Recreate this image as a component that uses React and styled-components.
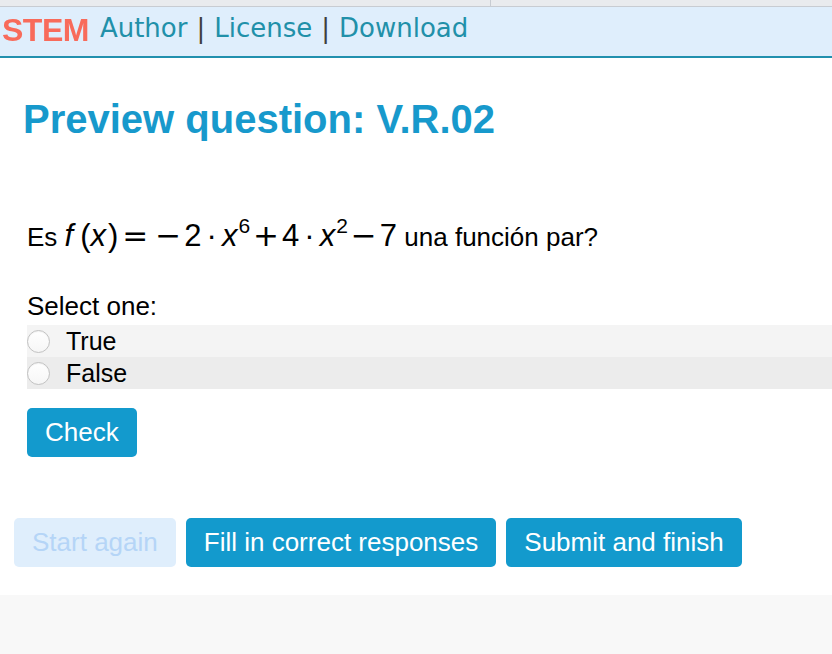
import React from "react";
import styled, { createGlobalStyle } from "styled-components";

const GlobalStyle = createGlobalStyle`
  html, body {
    margin: 0;
    padding: 0;
    background: #ffffff;
  }
  body {
    font-family: "Liberation Sans", Arial, Helvetica, sans-serif;
    color: #000;
  }
`;

export default function App() {
  return (
    <Page>
      <GlobalStyle />
      <TopStrip>
        <StripCell />
      </TopStrip>
      <NavBar>
        <Logo>STEM</Logo>
        <NavLink>Author</NavLink>
        <Sep>|</Sep>
        <NavLink>License</NavLink>
        <Sep>|</Sep>
        <NavLink>Download</NavLink>
      </NavBar>
      <Main>
        <Heading>Preview question: V.R.02</Heading>
        <Content>
          <Question>
            Es{" "}
            <MathExpr>
              <Var gap={7}>f</Var>
              <Paren>(</Paren>
              <Var gap={2}>x</Var>
              <Paren>)</Paren>
              <Op space={4}>=</Op>
              <Op space={3}>−</Op>
              <Num>2</Num>
              <Dot>·</Dot>
              <Var>x</Var>
              <Sup>6</Sup>
              <Op space={3}>+</Op>
              <Num>4</Num>
              <Dot>·</Dot>
              <Var>x</Var>
              <Sup>2</Sup>
              <Op space={3}>−</Op>
              <Num>7</Num>
            </MathExpr>{" "}
            una función par?
          </Question>
          <Prompt>Select one:</Prompt>
          <Options>
            <Option shade="#f4f4f4">
              <Radio />
              <OptionLabel>True</OptionLabel>
            </Option>
            <Option shade="#ececec">
              <Radio />
              <OptionLabel>False</OptionLabel>
            </Option>
          </Options>
          <Button>Check</Button>
        </Content>
        <Actions>
          <Button disabled>Start again</Button>
          <Button>Fill in correct responses</Button>
          <Button>Submit and finish</Button>
        </Actions>
      </Main>
      <Footer />
    </Page>
  );
}

const Page = styled.div`
  min-height: 654px;
  display: flex;
  flex-direction: column;
`;

const TopStrip = styled.div`
  height: 6px;
  background: #e9ebee;
  border-bottom: 1px solid #c8ccd2;
  display: flex;
`;

const StripCell = styled.div`
  width: 490px;
  border-right: 1px solid #c8ccd2;
`;

const NavBar = styled.div`
  height: 51px;
  box-sizing: border-box;
  padding: 0 2px 8px;
  background: #dfeefc;
  border-bottom: 2px solid #2190ae;
  display: flex;
  align-items: center;
  font-family: "DejaVu Sans", Verdana, sans-serif;
  font-size: 26px;
`;

const Logo = styled.span`
  font-family: "Liberation Sans", Arial, sans-serif;
  font-weight: bold;
  font-size: 32px;
  letter-spacing: -0.5px;
  color: #f86b5b;
  filter: blur(0.5px);
  margin-right: 11px;
  margin-top: 6px;
`;

const NavLink = styled.span`
  color: #2190a9;
`;

const Sep = styled.span`
  color: #3f3f3f;
  margin: 0 9px;
`;

const Main = styled.div`
  padding: 0 14px;
`;

const Heading = styled.h1`
  margin: 39px 0 0 9px;
  font-size: 40px;
  font-weight: bold;
  color: #1799cc;
`;

const Content = styled.div`
  padding-left: 13px;
`;

const Question = styled.div`
  margin-top: 73px;
  font-size: 26px;
  line-height: 40px;
`;

const MathExpr = styled.span`
  font-size: 31px;
  white-space: nowrap;
`;

const Var = styled.span`
  font-style: italic;
  margin-right: ${(p) => p.gap || 0}px;
`;

const Paren = styled.span``;

const Num = styled.span``;

const Op = styled.span`
  font-family: "DejaVu Sans", sans-serif;
  margin: 0 ${(p) => p.space}px;
`;

const Dot = styled.span`
  margin: 0 5px;
`;

const Sup = styled.sup`
  font-size: 21px;
  vertical-align: 13px;
  line-height: 0;
  margin-left: 1px;
`;

const Prompt = styled.div`
  margin-top: 33px;
  font-size: 26px;
  line-height: 32px;
  margin-bottom: 3px;
`;

const Options = styled.div`
  margin-right: -14px;
`;

const Option = styled.div`
  height: 32px;
  display: flex;
  align-items: center;
  background: ${(p) => p.shade};
`;

const Radio = styled.span`
  width: 23px;
  height: 23px;
  box-sizing: border-box;
  border-radius: 50%;
  border: 1px solid #c2c2c2;
  background: linear-gradient(#ffffff, #f6f6f6);
  box-shadow: inset 0 1px 1px rgba(0, 0, 0, 0.05);
  margin-right: 16px;
`;

const OptionLabel = styled.span`
  font-size: 25px;
`;

const Button = styled.button`
  height: 49px;
  padding: 0 18px;
  border: none;
  border-radius: 5px;
  font-family: "Liberation Sans", Arial, sans-serif;
  font-size: 26px;
  color: #ffffff;
  background: #139acd;
  margin-top: 19px;
  cursor: pointer;

  &:disabled {
    background: #dfeefc;
    color: #b5d5f7;
    cursor: default;
  }
`;

const Actions = styled.div`
  display: flex;
  gap: 10px;
  margin-top: 42px;
`;

const Footer = styled.div`
  flex: 1;
  margin-top: 28px;
  background: #f8f8f8;
`;
